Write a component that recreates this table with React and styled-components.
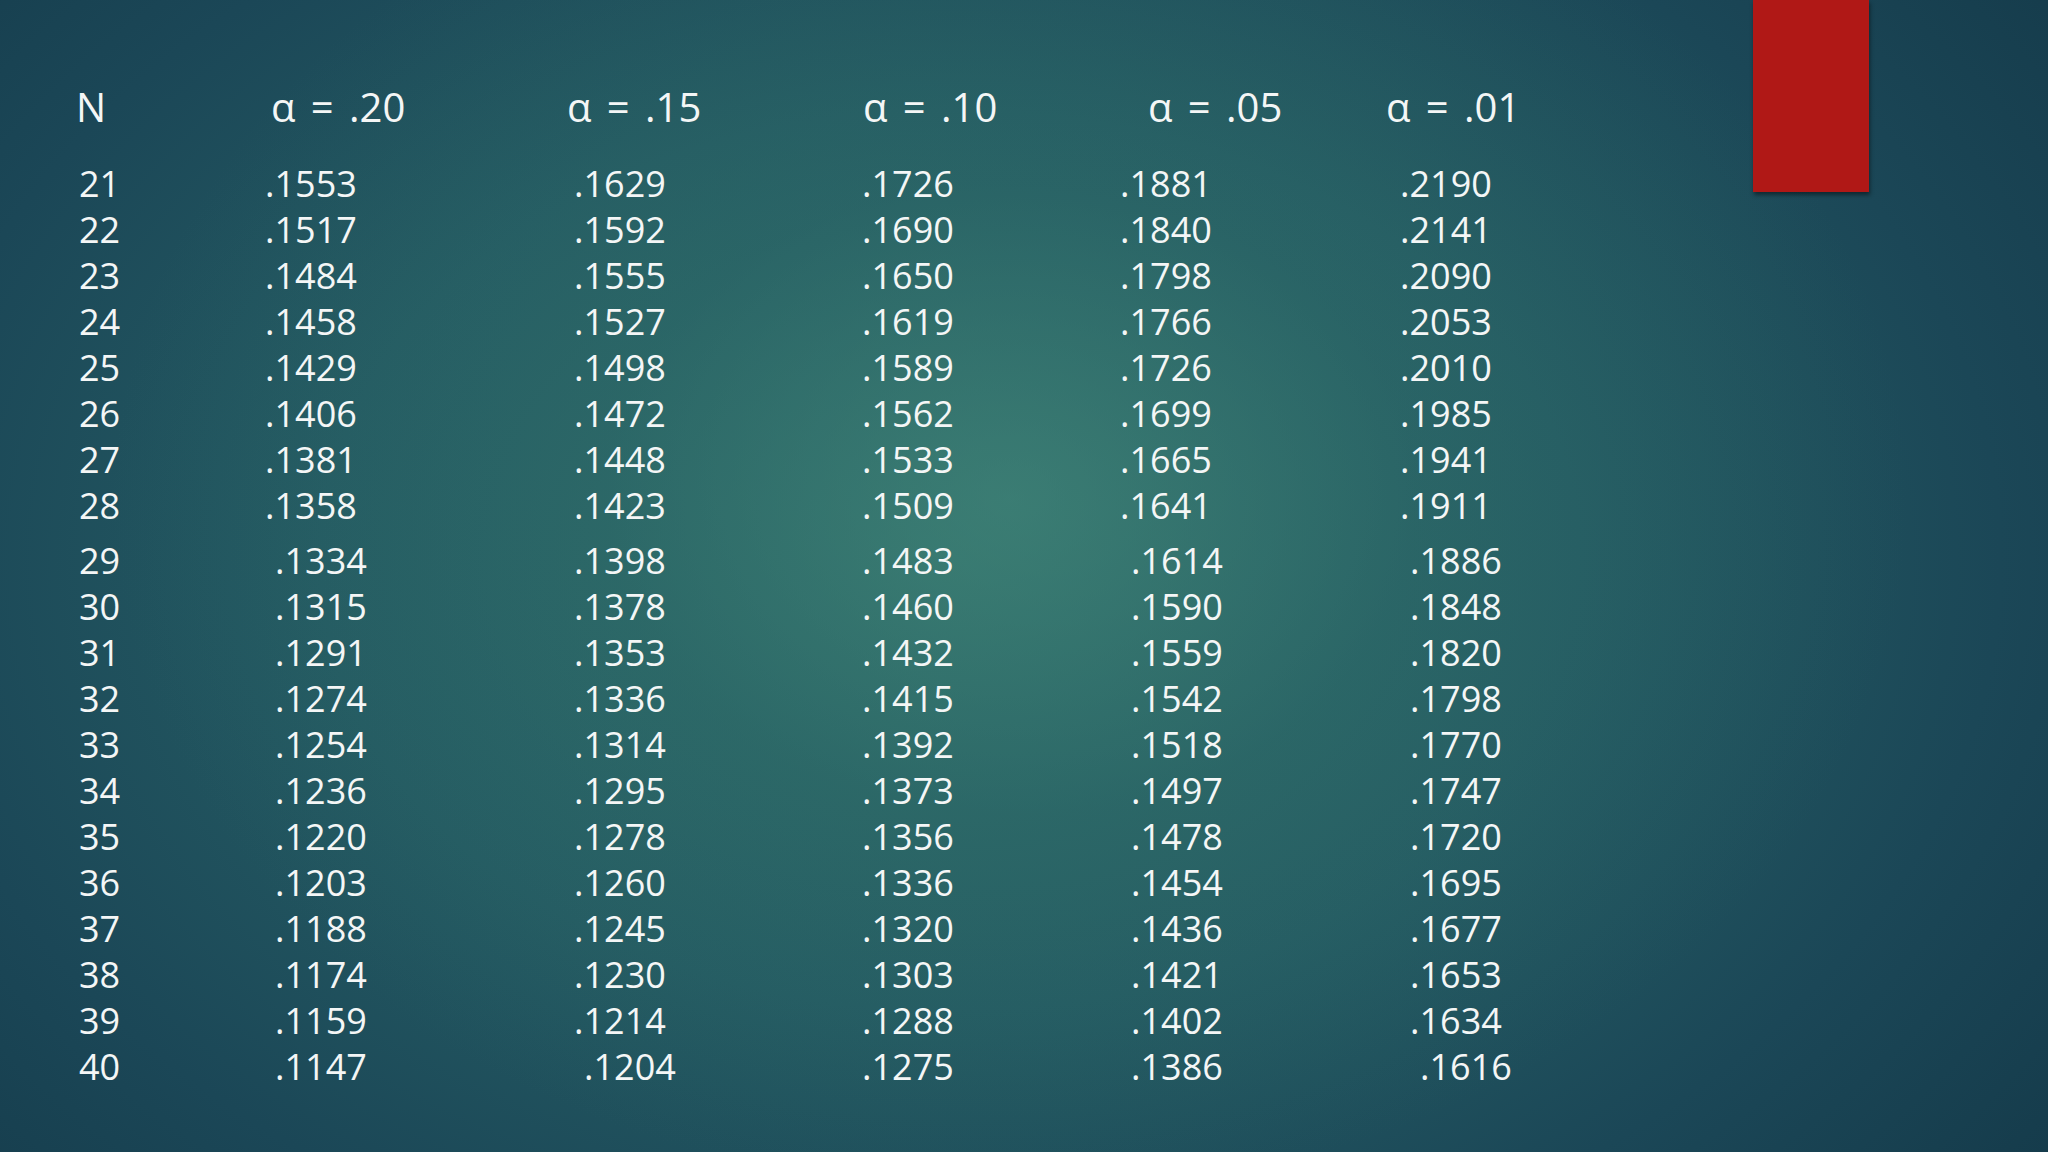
import React from 'react';
import styled, { createGlobalStyle } from 'styled-components';

const Global = createGlobalStyle`
  html, body {
    margin: 0;
    padding: 0;
    overflow: hidden;
    background: #173f4e;
  }
`;

const Slide = styled.div`
  position: relative;
  width: 2048px;
  height: 1152px;
  box-sizing: border-box;
  padding-top: 82px;
  overflow: hidden;
  font-family: "Open Sans", "Noto Sans", sans-serif;
  color: #f4f6f6;
  background:
    radial-gradient(ellipse 900px 700px at 1010px 500px, rgba(70, 140, 125, 0.55) 0%, rgba(50, 115, 108, 0.3) 45%, rgba(30, 80, 90, 0) 100%),
    radial-gradient(ellipse 1400px 1000px at 950px 560px, #2f6d69 0%, #245a62 45%, #1b4757 75%, #153b4b 100%);
`;

// red tab hanging from the top edge
const Tab = styled.div`
  position: absolute;
  top: 0;
  left: 1753px;
  width: 116px;
  height: 192px;
  background: #b01816;
  box-shadow: 1px 3px 4px rgba(0, 0, 0, 0.45);
`;

const Row = styled.div`
  display: grid;
  grid-template-columns: ${p => p.cols};
  margin-left: ${p => p.left}px;
  height: ${p => p.h}px;
  line-height: ${p => p.h}px;
  font-size: ${p => p.size}px;
  word-spacing: ${p => p.ws || 0}px;
  white-space: pre;
`;

const Cell = styled.span`
  padding-left: ${p => p.shift || 0}px;
`;

const Block = styled.div`
  margin-top: ${p => p.gap}px;
`;

const toCols = starts =>
  starts.slice(1).map((s, i) => `${s - starts[i]}px`).join(' ') + ' 1fr';

const headStarts = [76, 271, 567, 863, 1148, 1386];
const aStarts = [79, 265, 574, 862, 1120, 1400];
const bStarts = [79, 275, 574, 862, 1131, 1410];

const blockA = [
  ['21', '.1553', '.1629', '.1726', '.1881', '.2190'],
  ['22', '.1517', '.1592', '.1690', '.1840', '.2141'],
  ['23', '.1484', '.1555', '.1650', '.1798', '.2090'],
  ['24', '.1458', '.1527', '.1619', '.1766', '.2053'],
  ['25', '.1429', '.1498', '.1589', '.1726', '.2010'],
  ['26', '.1406', '.1472', '.1562', '.1699', '.1985'],
  ['27', '.1381', '.1448', '.1533', '.1665', '.1941'],
  ['28', '.1358', '.1423', '.1509', '.1641', '.1911'],
];

const blockB = [
  ['29', '.1334', '.1398', '.1483', '.1614', '.1886'],
  ['30', '.1315', '.1378', '.1460', '.1590', '.1848'],
  ['31', '.1291', '.1353', '.1432', '.1559', '.1820'],
  ['32', '.1274', '.1336', '.1415', '.1542', '.1798'],
  ['33', '.1254', '.1314', '.1392', '.1518', '.1770'],
  ['34', '.1236', '.1295', '.1373', '.1497', '.1747'],
  ['35', '.1220', '.1278', '.1356', '.1478', '.1720'],
  ['36', '.1203', '.1260', '.1336', '.1454', '.1695'],
  ['37', '.1188', '.1245', '.1320', '.1436', '.1677'],
  ['38', '.1174', '.1230', '.1303', '.1421', '.1653'],
  ['39', '.1159', '.1214', '.1288', '.1402', '.1634'],
  ['40', '.1147', '.1204', '.1275', '.1386', '.1616'],
];

const shifts = { '40': [0, 0, 10, 0, 0, 10] };

const headers = ['N', 'α = .20', 'α = .15', 'α = .10', 'α = .05', 'α = .01'];

const DataRows = ({ rows, starts }) =>
  rows.map(r => (
    <Row key={r[0]} cols={toCols(starts)} left={starts[0]} h={46} size={36}>
      {r.map((v, i) => (
        <Cell key={i} shift={shifts[r[0]] ? shifts[r[0]][i] : 0}>{v}</Cell>
      ))}
    </Row>
  ));

const App = () => (
  <Slide>
    <Global />
    <Tab />
    <Row cols={toCols(headStarts)} left={headStarts[0]} h={50} size={40} ws={5}>
      {headers.map(h => <Cell key={h}>{h}</Cell>)}
    </Row>
    <Block gap={29}>
      <DataRows rows={blockA} starts={aStarts} />
    </Block>
    <Block gap={9}>
      <DataRows rows={blockB} starts={bStarts} />
    </Block>
  </Slide>
);

export default App;
